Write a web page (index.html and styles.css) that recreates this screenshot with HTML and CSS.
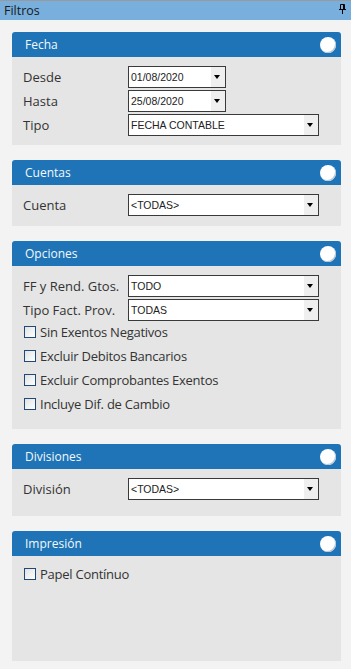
FILE: index.html
```
<!doctype html>
<html>
<head>
	<title>Filtros</title>
	<link rel="stylesheet" href="styles.css">
</head>
<body>
	<div class="titlebar">
		<span>Filtros</span>
		<svg class="pin" width="7" height="10" viewBox="0 0 7 10"><path d="M1.5 0.5h4v5h-4z M0 5.5h7 M3.5 6v4" fill="none" stroke="#000" stroke-width="1"/><path d="M4 1h1v4h-1z" fill="#000"/></svg>
	</div>

	<div class="content">
		<div class="panel">
			<div class="panel-head">Fecha<span class="knob"></span></div>
			<div class="panel-body fecha">
				<div class="row"><label>Desde</label><div class="select short"><span>01/08/2020</span><b></b></div></div>
				<div class="row"><label>Hasta</label><div class="select short"><span>25/08/2020</span><b></b></div></div>
				<div class="row"><label>Tipo</label><div class="select"><span>FECHA CONTABLE</span><b></b></div></div>
			</div>
		</div>

		<div class="panel">
			<div class="panel-head">Cuentas<span class="knob"></span></div>
			<div class="panel-body cuentas">
				<div class="row"><label>Cuenta</label><div class="select"><span>&lt;TODAS&gt;</span><b></b></div></div>
			</div>
		</div>

		<div class="panel">
			<div class="panel-head">Opciones<span class="knob"></span></div>
			<div class="panel-body opciones">
				<div class="row"><label>FF y Rend. Gtos.</label><div class="select"><span>TODO</span><b></b></div></div>
				<div class="row"><label>Tipo Fact. Prov.</label><div class="select"><span>TODAS</span><b></b></div></div>
				<div class="check first"><i></i>Sin Exentos Negativos</div>
				<div class="check"><i></i>Excluir Debitos Bancarios</div>
				<div class="check"><i></i>Excluir Comprobantes Exentos</div>
				<div class="check"><i></i>Incluye Dif. de Cambio</div>
			</div>
		</div>

		<div class="panel">
			<div class="panel-head">Divisiones<span class="knob"></span></div>
			<div class="panel-body divisiones">
				<div class="row"><label>División</label><div class="select"><span>&lt;TODAS&gt;</span><b></b></div></div>
			</div>
		</div>

		<div class="panel">
			<div class="panel-head">Impresión<span class="knob"></span></div>
			<div class="panel-body impresion">
				<div class="check first"><i></i>Papel Contínuo</div>
			</div>
		</div>
	</div>
</body>
</html>
```

FILE: styles.css
```
html, body {margin: 0; padding: 0;}
body {background: #f3f3f3; font-family: "Open Sans", sans-serif; color: #333; width: 351px; height: 669px; overflow: hidden;}

.titlebar {height: 19px; border-top: 1px solid #9a9a9a; background: #78afdc; display: flex; align-items: center; justify-content: space-between; padding: 0 5px 0 4px; font-size: 12.5px; color: #1a1a1a;}
.titlebar .pin {display: block; margin-top: -3px;}

.content {padding: 12px 10px 0 12px; display: flex; flex-direction: column; gap: 15px;}

.panel {width: 329px;}
.panel-head {height: 25px; background: #1e74b6; border-radius: 3px 3px 0 0; color: #f4f8fc; font-size: 12px; display: flex; align-items: center; justify-content: space-between; padding: 0 5px 0 13px; box-sizing: border-box;}
.knob {width: 16px; height: 16px; border-radius: 50%; background: #fff; box-shadow: -1px -1px 0 #b9c6d3 inset;}

.panel-body {background: #e5e5e5; padding: 9px 22px 0 11px; box-sizing: border-box;}
.fecha {height: 88px;}
.cuentas {height: 41px;}
.opciones {height: 163px;}
.divisiones {height: 47px;}
.impresion {height: 105px;}

.row {display: flex; align-items: center; height: 22px; margin-bottom: 2px; font-size: 13px;}
.row label {width: 105px; flex: none;}

.select {width: 191px; height: 22px; box-sizing: border-box; border: 1px solid #3a3a3a; background: #fff; display: flex; align-items: stretch; font-family: "Liberation Sans", sans-serif; font-size: 10.5px; color: #222;}
.select.short {width: 98px;}
.select span {flex: 1; padding-left: 2px; display: flex; align-items: center;}
.select b {width: 14px; background: #efefef; position: relative;}
.select b:after {content: ""; position: absolute; left: 3px; top: 8px; border-left: 3.5px solid transparent; border-right: 3.5px solid transparent; border-top: 4px solid #000;}

.check {display: flex; align-items: center; height: 24px; font-size: 13px; letter-spacing: -0.25px;}
.check.first {margin-top: -3px;}
.check i {width: 12px; height: 12px; box-sizing: border-box; border: 1px solid #1f4a78; background: linear-gradient(135deg, #e2e2e2, #ffffff); margin: 0 4px 0 1px; flex: none;}
```
